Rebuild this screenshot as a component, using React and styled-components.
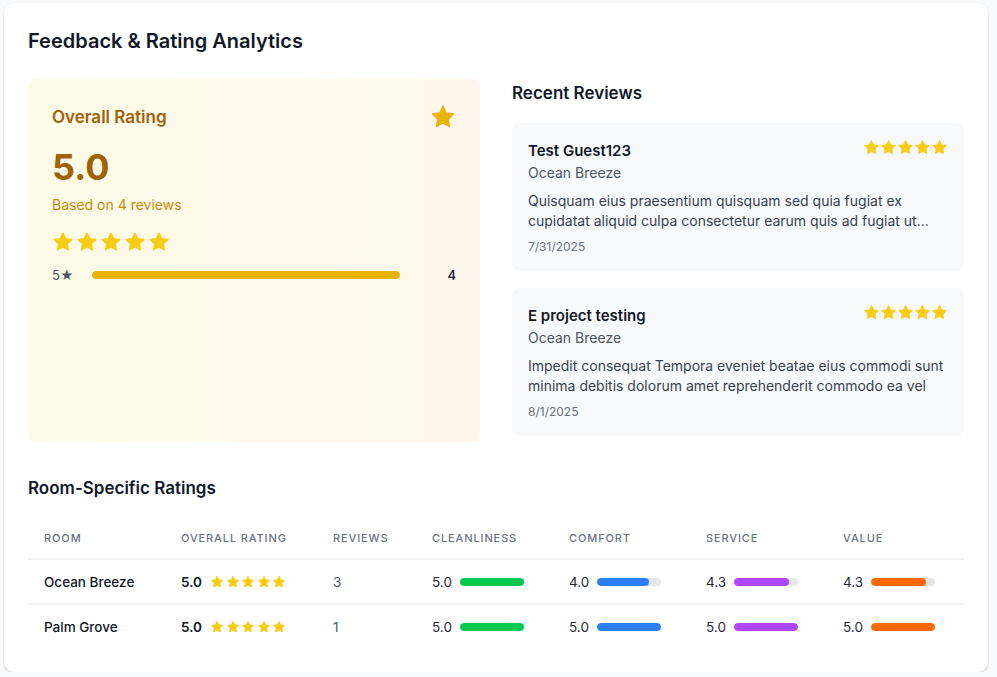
import React from 'react';
import styled, { createGlobalStyle } from 'styled-components';

const GlobalStyle = createGlobalStyle`
  * { box-sizing: border-box; }
  body {
    margin: 0;
    background: #f8f9fb;
    font-family: Inter, 'Liberation Sans', sans-serif;
    color: #111827;
  }
`;

const Page = styled.div`
  padding: 3px 0 0 4px;
`;

const Card = styled.div`
  width: 984px;
  background: #fff;
  border-radius: 10px;
  box-shadow: 0 1px 3px rgba(0, 0, 0, 0.12), 0 1px 2px rgba(0, 0, 0, 0.06);
  padding: 24px;
`;

const Title = styled.h2`
  margin: 0 0 24px;
  font-size: 20px;
  line-height: 28px;
  font-weight: 600;
  color: #111827;
`;

const TopGrid = styled.div`
  display: grid;
  grid-template-columns: 1fr 1fr;
  grid-template-rows: minmax(363px, auto);
  gap: 32px;
  margin-bottom: 32px;
`;

const OverallBox = styled.div`
  background: linear-gradient(90deg, #fefbe8 0%, #fff7ed 100%);
  border-radius: 8px;
  padding: 24px;
`;

const BoxHeader = styled.div`
  display: flex;
  align-items: center;
  justify-content: space-between;
  margin-bottom: 16px;
`;

const BoxTitle = styled.h3`
  margin: 0;
  font-size: 17px;
  line-height: 28px;
  font-weight: 600;
  color: #a16207;
`;

const BigScore = styled.div`
  font-size: 36px;
  line-height: 40px;
  font-weight: 700;
  color: #a16207;
  margin-bottom: 8px;
`;

const BasedOn = styled.div`
  font-size: 14px;
  line-height: 20px;
  color: #ca8a04;
  margin-bottom: 16px;
`;

const Stars = styled.div`
  display: flex;
  align-items: center;
  gap: ${(p) => p.$gap}px;
`;

const DistRow = styled.div`
  display: flex;
  align-items: center;
  margin-top: 12px;
  font-size: 13px;
  line-height: 20px;
`;

const DistLabel = styled.span`
  width: 40px;
  color: #4b5563;
`;

const Track = styled.div`
  flex: ${(p) => (p.$w ? 'none' : '1')};
  width: ${(p) => (p.$w ? `${p.$w}px` : 'auto')};
  height: 8px;
  border-radius: 4px;
  background: #e5e7eb;
  overflow: hidden;
  margin-right: ${(p) => p.$mr || 0}px;
`;

const Fill = styled.div`
  height: 100%;
  border-radius: 4px;
  background: ${(p) => p.$color};
`;

const DistCount = styled.span`
  width: 32px;
  text-align: right;
  font-weight: 500;
  color: #111827;
`;

const RightCol = styled.div`
  display: flex;
  flex-direction: column;
`;

const SectionTitle = styled.h3`
  margin: 0 0 16px;
  font-size: 17px;
  line-height: 28px;
  font-weight: 600;
  color: #111827;
`;

const ReviewList = styled.div`
  display: flex;
  flex-direction: column;
  gap: 17px;
`;

const ReviewCard = styled.div`
  background: #f8f9fb;
  border-radius: 8px;
  padding: 16px;
`;

const ReviewHead = styled.div`
  display: flex;
  justify-content: space-between;
  align-items: flex-start;
`;

const Guest = styled.div`
  font-size: 15px;
  line-height: 24px;
  font-weight: 600;
  color: #111827;
`;

const RoomName = styled.div`
  font-size: 14px;
  line-height: 20px;
  color: #4b5563;
`;

const Comment = styled.p`
  margin: 8px 0 0;
  font-size: 14px;
  line-height: 20px;
  color: #374151;
  display: -webkit-box;
  -webkit-line-clamp: 2;
  -webkit-box-orient: vertical;
  overflow: hidden;
`;

const DateText = styled.div`
  margin-top: 8px;
  font-size: 12px;
  line-height: 16px;
  color: #6b7280;
`;

const Table = styled.table`
  width: 100%;
  border-collapse: collapse;
  table-layout: fixed;
`;

const Th = styled.th`
  text-align: left;
  padding: 12px 16px;
  font-size: 11px;
  line-height: 16px;
  font-weight: 500;
  letter-spacing: 0.08em;
  text-transform: uppercase;
  color: #6b7280;
  border-bottom: 2px solid #f0f1f3;
`;

const Td = styled.td`
  padding: 12px 16px 11px;
  font-size: 13.5px;
  line-height: 20px;
  color: ${(p) => (p.$muted ? '#4b5563' : '#111827')};
  font-weight: ${(p) => (p.$bold ? 500 : 400)};
  white-space: nowrap;
`;

const Tr = styled.tr`
  & + & td { border-top: 2px solid #f0f1f3; }
`;

const Inline = styled.div`
  display: flex;
  align-items: center;
  gap: 8px;
`;

const Score = styled.span`
  font-weight: ${(p) => (p.$bold ? 600 : 400)};
  color: ${(p) => (p.$bold ? '#111827' : '#1f2937')};
`;

const StarIcon = ({ size, color = '#facc15' }) => (
  <svg width={size} height={size} viewBox="0 0 24 24">
    <path
      d="M12 2.2l2.95 6.1 6.7.95-4.85 4.7 1.15 6.65L12 17.45 6.05 20.6l1.15-6.65-4.85-4.7 6.7-.95z"
      fill={color}
      stroke={color}
      strokeWidth="1.4"
      strokeLinejoin="round"
    />
  </svg>
);

const StarRow = ({ size, gap, color }) => (
  <Stars $gap={gap}>
    {[0, 1, 2, 3, 4].map((i) => <StarIcon key={i} size={size} color={color} />)}
  </Stars>
);

const reviews = [
  {
    name: 'Test Guest123',
    room: 'Ocean Breeze',
    text: 'Quisquam eius praesentium quisquam sed quia fugiat ex cupidatat aliquid culpa consectetur earum quis ad fugiat ut exercitationem voluptatibus.',
    date: '7/31/2025',
  },
  {
    name: 'E project testing',
    room: 'Ocean Breeze',
    text: 'Impedit consequat Tempora eveniet beatae eius commodi sunt minima debitis dolorum amet reprehenderit commodo ea vel',
    date: '8/1/2025',
  },
];

const rooms = [
  { name: 'Ocean Breeze', overall: 5.0, reviews: 3, cleanliness: 5.0, comfort: 4.0, service: 4.3, value: 4.3 },
  { name: 'Palm Grove', overall: 5.0, reviews: 1, cleanliness: 5.0, comfort: 5.0, service: 5.0, value: 5.0 },
];

const metrics = [
  { key: 'cleanliness', color: '#00c950' },
  { key: 'comfort', color: '#2b7fff' },
  { key: 'service', color: '#ad46ff' },
  { key: 'value', color: '#ff6900' },
];

const colWidths = [137, 152, 99, 137, 137, 137, 137];

const App = () => (
  <Page>
    <GlobalStyle />
    <Card>
      <Title>Feedback &amp; Rating Analytics</Title>
      <TopGrid>
        <OverallBox>
          <BoxHeader>
            <BoxTitle>Overall Rating</BoxTitle>
            <StarIcon size={26} color="#eab308" />
          </BoxHeader>
          <BigScore>5.0</BigScore>
          <BasedOn>Based on 4 reviews</BasedOn>
          <StarRow size={22} gap={2} />
          <DistRow>
            <DistLabel>5★</DistLabel>
            <Track $mr={24}>
              <Fill $color="#eab308" style={{ width: '100%' }} />
            </Track>
            <DistCount>4</DistCount>
          </DistRow>
        </OverallBox>
        <RightCol>
          <SectionTitle>Recent Reviews</SectionTitle>
          <ReviewList>
            {reviews.map((r) => (
              <ReviewCard key={r.name}>
                <ReviewHead>
                  <div>
                    <Guest>{r.name}</Guest>
                    <RoomName>{r.room}</RoomName>
                  </div>
                  <StarRow size={17} gap={0} />
                </ReviewHead>
                <Comment>{r.text}</Comment>
                <DateText>{r.date}</DateText>
              </ReviewCard>
            ))}
          </ReviewList>
        </RightCol>
      </TopGrid>

      <SectionTitle>Room-Specific Ratings</SectionTitle>
      <Table>
        <colgroup>
          {colWidths.map((w, i) => <col key={i} style={{ width: w }} />)}
        </colgroup>
        <thead>
          <tr>
            <Th>Room</Th>
            <Th>Overall Rating</Th>
            <Th>Reviews</Th>
            <Th>Cleanliness</Th>
            <Th>Comfort</Th>
            <Th>Service</Th>
            <Th>Value</Th>
          </tr>
        </thead>
        <tbody>
          {rooms.map((room) => (
            <Tr key={room.name}>
              <Td $bold>{room.name}</Td>
              <Td>
                <Inline>
                  <Score $bold>{room.overall.toFixed(1)}</Score>
                  <StarRow size={14} gap={1.5} />
                </Inline>
              </Td>
              <Td $muted>{room.reviews}</Td>
              {metrics.map((m) => (
                <Td key={m.key}>
                  <Inline>
                    <Score>{room[m.key].toFixed(1)}</Score>
                    <Track $w={64}>
                      <Fill $color={m.color} style={{ width: `${(room[m.key] / 5) * 100}%` }} />
                    </Track>
                  </Inline>
                </Td>
              ))}
            </Tr>
          ))}
        </tbody>
      </Table>
    </Card>
  </Page>
);

export default App;
